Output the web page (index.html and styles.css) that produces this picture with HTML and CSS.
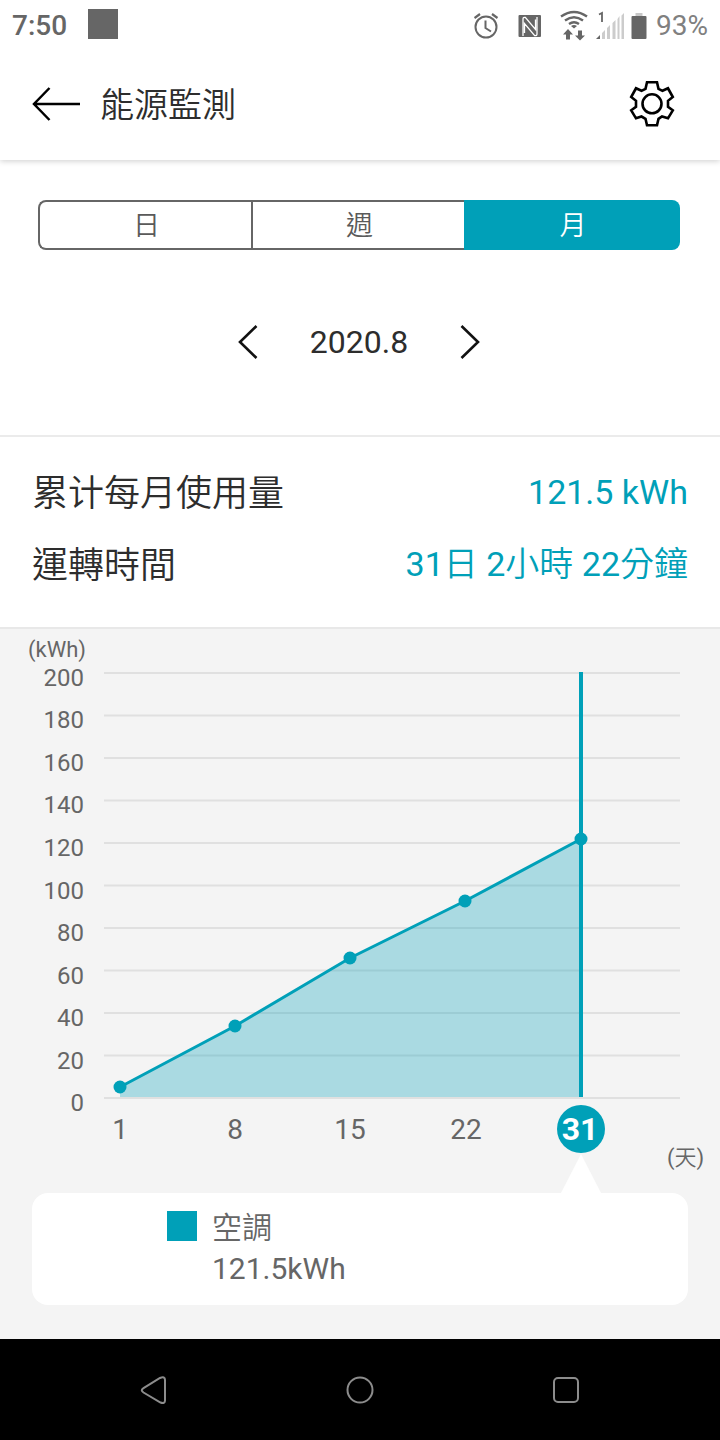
FILE: index.html
```html
<!DOCTYPE html>
<html lang="zh-Hant">
<head>
<meta charset="utf-8">
<meta name="viewport" content="width=device-width, initial-scale=1">
<title>能源監測</title>
<link rel="stylesheet" href="styles.css">
</head>
<body>
<div class="screen">
  <div class="top">
    <div class="status">
      <span class="status-time">7:50</span>
      <span class="status-block"></span>
      <svg class="status-icons" viewBox="0 0 174 44" width="174" height="44" aria-hidden="true">
        <g fill="none" stroke="#666" stroke-width="2">
          <circle cx="12" cy="24" r="10.500"/>
          <path d="M11.500 17.500v7.500l5.500 3.500"/>
          <path d="M0.500 15l5.500-4M18 11l5.500 4" stroke-width="2.200"/>
        </g>
        <rect x="44.500" y="12" width="22.500" height="22" rx="1" fill="#666"/>
        <path d="M49 33V16Q49 14 51.500 14.500L61.500 26.500V16.500M63 14V31Q63 33 60.500 32.500L50.500 20.500V30" fill="none" stroke="#fff" stroke-width="1.300"/>
        <g fill="none" stroke="#666" stroke-width="2.400">
          <path d="M87 13.500Q100 4.500 113 13.500"/>
          <path d="M91 17.500Q100 11 109 17.500"/>
          <path d="M95 21Q100 17.500 105 21"/>
        </g>
        <path d="M97 23q3-2 6 0l-3 2.500zM94 26l5 5.500h-3v5h-4v-5h-3zM106 37.500l-5-5h3v-5h4v5h3z" fill="#666"/>
        <path d="M125 11.500l3-1.500v9" fill="none" stroke="#666" stroke-width="1.800"/>
        <path d="M122 36l4-4v4z" fill="#666"/>
        <path d="M128 36v-6l3-3v9zM133 36V25l3-3v14zM138.500 36V20l3-3v19zM143.500 36V16l2-3v23zM147.500 36V12.500l2.500-2.500v26z" fill="#ccc"/>
        <path d="M161.500 10h7v3h-7z" fill="#c8c8c8"/>
        <rect x="157.500" y="13" width="15" height="23" rx="1" fill="#666"/>
      </svg>
      <span class="status-percent">93%</span>
    </div>
    <header class="header">
      <button class="icon-button" aria-label="返回">
        <svg viewBox="0 0 50 36" width="50" height="36"><path d="M19.500 2L4 18l15.500 16M4 18H50" fill="none" stroke="#000" stroke-width="2.500"/></svg>
      </button>
      <h1 class="title">能源監測</h1>
      <button class="icon-button settings" aria-label="設定">
        <svg viewBox="0 0 48 48" width="48" height="48">
          <g fill="none" stroke="#000" stroke-width="2.600">
            <path d="M19 2.300H29L30.500 8.800L34.500 10.800L40 8.300L44.800 17L40 20.800V26.800L44.800 30.300L40 38.300L34 36.500L30.500 38.800L29 45.300H19L17.500 38.800L13.500 36.500L8 38.300L3.200 30.300L8 26.800V20.800L3.200 17L8 8.300L13.500 10.800L17.500 8.800Z"/>
            <circle cx="24" cy="23.800" r="9.500"/>
          </g>
        </svg>
      </button>
    </header>
  </div>

  <main class="main">
    <section class="period">
      <div class="tabs">
        <button class="tab">日</button>
        <button class="tab">週</button>
        <button class="tab tab-active" aria-pressed="true">月</button>
      </div>
      <div class="date-picker">
        <button class="icon-button" aria-label="上個月">
          <svg viewBox="0 0 22 36" width="22" height="36"><path d="M19.500 2L3 18l16.500 16" fill="none" stroke="#111" stroke-width="2.600"/></svg>
        </button>
        <span class="date">2020.8</span>
        <button class="icon-button" aria-label="下個月">
          <svg viewBox="0 0 22 36" width="22" height="36"><path d="M2.500 2L19 18L2.500 34" fill="none" stroke="#111" stroke-width="2.600"/></svg>
        </button>
      </div>
    </section>

    <dl class="summary">
      <div class="summary-row"><dt>累计每月使用量</dt><dd>121.5 kWh</dd></div>
      <div class="summary-row"><dt>運轉時間</dt><dd>31日 2小時 22分鐘</dd></div>
    </dl>

    <section class="usage">
      <svg class="chart" viewBox="0 0 720 564" role="img" aria-label="每月用電量">
        <path class="grid" d="M104 44H680M104 86.500H680M104 129H680M104 171.500H680M104 214H680M104 256.500H680M104 299H680M104 341.500H680M104 384H680M104 426.500H680M104 469H680"/>
        <text class="unit" x="28" y="28">(kWh)</text>
        <g class="y-labels">
          <text x="84" y="57">200</text>
          <text x="84" y="99">180</text>
          <text x="84" y="142">160</text>
          <text x="84" y="184">140</text>
          <text x="84" y="227">120</text>
          <text x="84" y="270">100</text>
          <text x="84" y="312">80</text>
          <text x="84" y="355">60</text>
          <text x="84" y="397">40</text>
          <text x="84" y="440">20</text>
          <text x="84" y="482">0</text>
        </g>
        <path class="area" d="M120 458L235 397L350 329L465 272L581 210V468H120Z"/>
        <path class="line" d="M120 458L235 397L350 329L465 272L581 210"/>
        <path class="marker" d="M581 43V468"/>
        <g class="points">
          <circle cx="120" cy="458" r="6.500"/>
          <circle cx="235" cy="397" r="6.500"/>
          <circle cx="350" cy="329" r="6.500"/>
          <circle cx="465" cy="272" r="6.500"/>
          <circle cx="581" cy="210" r="6.500"/>
          <circle cx="581" cy="500" r="24"/>
        </g>
        <g class="x-labels">
          <text x="120" y="510">1</text>
          <text x="235" y="510">8</text>
          <text x="350" y="510">15</text>
          <text x="466" y="510">22</text>
          <text class="selected" x="580" y="511">31</text>
        </g>
        <text class="unit" x="667" y="536">(天)</text>
        <path class="pointer" d="M581 525L601 564H561Z"/>
      </svg>
      <div class="card">
        <span class="swatch"></span>
        <div class="device">
          <div>空調</div>
          <div>121.5kWh</div>
        </div>
      </div>
    </section>
  </main>

  <nav class="system-nav">
    <button class="icon-button" aria-label="返回上一頁">
      <svg viewBox="0 0 30 30" width="30" height="30"><path d="M4.500 13.200L21 3Q26 1 26 5V25.500Q26 29 21.500 27.500L4.500 17.500Q1 15.300 4.500 13.200Z"/></svg>
    </button>
    <button class="icon-button" aria-label="主畫面">
      <svg viewBox="0 0 30 30" width="30" height="30"><circle cx="15" cy="15" r="12.500"/></svg>
    </button>
    <button class="icon-button" aria-label="最近使用">
      <svg viewBox="0 0 30 30" width="30" height="30"><rect x="3" y="3" width="24" height="24" rx="4"/></svg>
    </button>
  </nav>
</div>
</body>
</html>
```
FILE: styles.css
```css
* {
  box-sizing: border-box;
}

body {
  margin: 0;
  background: #fff;
  color: #2d2d2d;
  font-family: Roboto, "Noto Sans CJK TC DemiLight", "Noto Sans CJK TC", sans-serif;
}

button {
  font: inherit;
  color: inherit;
  background: none;
  border: 0;
  padding: 0;
}

svg {
  display: block;
}

.screen {
  display: flex;
  flex-direction: column;
  min-height: 100vh;
}

.top {
  height: 160px;
  background: #fff;
  box-shadow: 0 1px 6px rgba(0, 0, 0, 0.2);
}

.status {
  display: flex;
  align-items: center;
  height: 50px;
  padding: 0 12px;
  font-size: 28px;
  color: #666;
}

.status-time {
  font-weight: 500;
}

.status-block {
  width: 30px;
  height: 30px;
  margin: 0 0 2px 21px;
  background: #666;
}

.status-icons {
  margin-left: auto;
}

.status-percent {
  margin-left: 8px;
  color: #808080;
}

.header {
  display: flex;
  align-items: center;
  height: 108px;
  padding: 0 44px 0 30px;
}

.title {
  margin: 0 0 4px 20px;
  font-size: 34px;
  font-weight: 400;
}

.settings {
  margin-left: auto;
}

.period {
  display: flex;
  flex-direction: column;
  align-items: center;
  gap: 67px;
  height: 277px;
  padding: 40px 40px 0 38px;
  border-bottom: 2px solid #ebebeb;
}

.tabs {
  display: grid;
  grid-template-columns: 71fr 71fr 72fr;
  width: 100%;
  height: 50px;
  font-size: 27px;
  color: #5a5a5a;
}

.tab {
  padding: 0 0 4px 2px;
  border: 2px solid #666;
  border-right-width: 0;
}

.tab:first-child {
  border-radius: 8px 0 0 8px;
}

.tab-active {
  border: 0;
  border-radius: 0 8px 8px 0;
  background: #00a0b8;
  color: #fff;
}

.date-picker {
  display: flex;
  align-items: center;
  gap: 51px;
  height: 50px;
  font-size: 32px;
}

.summary {
  margin: 0;
  padding: 19px 32px 27px;
  border-bottom: 2px solid #e8e8e8;
}

.summary-row {
  display: flex;
  justify-content: space-between;
  height: 72px;
  line-height: 72px;
}

.summary-row dt {
  font-size: 36px;
  line-height: 76px;
}

.summary-row dd {
  margin: 0;
  font-size: 34px;
  color: #00a0b8;
}

.main {
  flex: 1;
  display: flex;
  flex-direction: column;
}

.usage {
  flex: 1;
  padding-bottom: 34px;
  background: #f4f4f4;
}

.chart {
  width: 100%;
  height: auto;
  fill: #666;
}

.grid {
  stroke: #e0e0e0;
  stroke-width: 2;
}

.unit {
  font-size: 22px;
}

.y-labels {
  font-size: 24px;
  text-anchor: end;
}

.x-labels {
  font-size: 28px;
  text-anchor: middle;
}

.selected {
  font-size: 32px;
  font-weight: 700;
  fill: #fff;
}

.area {
  fill: #00a0b8;
  fill-opacity: 0.3;
}

.line {
  fill: none;
  stroke: #00a0b8;
  stroke-width: 3;
}

.marker {
  stroke: #00a0b8;
  stroke-width: 4;
}

.points {
  fill: #00a0b8;
}

.pointer {
  fill: #fff;
}

.card {
  display: flex;
  gap: 15px;
  height: 112px;
  margin: 0 32px;
  padding: 14px 20px 0 135px;
  border-radius: 16px;
  background: #fff;
  font-size: 30px;
  line-height: 41px;
  color: #666;
}

.swatch {
  width: 30px;
  height: 30px;
  margin-top: 4px;
  background: #00a0b8;
}

.system-nav {
  display: flex;
  justify-content: center;
  align-items: center;
  gap: 176px;
  height: 101px;
  background: #000;
}

.system-nav svg {
  fill: none;
  stroke: #8c8c8c;
  stroke-width: 2;
}
```
